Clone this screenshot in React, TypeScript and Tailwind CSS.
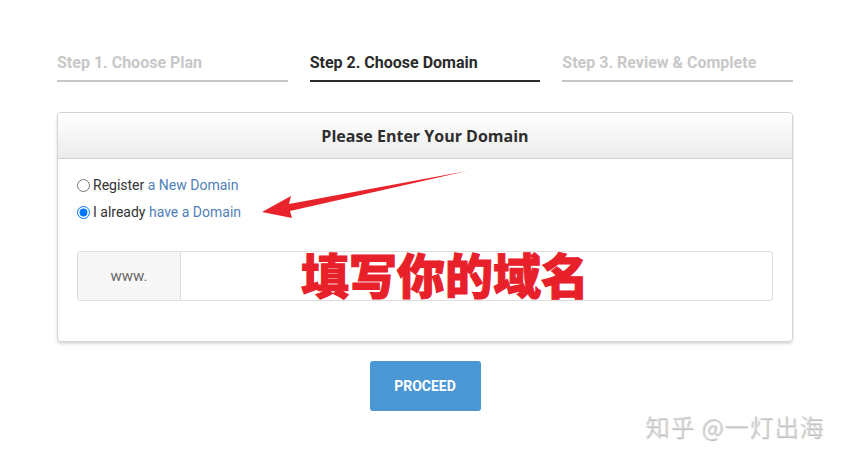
export default function App() {
  const steps = [
    { label: "Step 1. Choose Plan", active: false },
    { label: "Step 2. Choose Domain", active: true },
    { label: "Step 3. Review & Complete", active: false },
  ];

  return (
    <div className="relative w-[850px] h-[460px] bg-white overflow-hidden font-['Roboto',sans-serif]">
      <div className="w-[736px] ml-[57px] pt-[50px]">
        {/* step tabs */}
        <div className="grid grid-cols-3 gap-[22px]">
          {steps.map((s) => (
            <div
              key={s.label}
              className={`h-[32px] text-[16px] leading-[25px] font-bold border-b-2 ${
                s.active ? "text-[#2b2b2b] border-[#2b2b2b]" : "text-[#c8c8c8] border-[#c8c8c8]"
              }`}
            >
              {s.label}
            </div>
          ))}
        </div>

        {/* domain card */}
        <div className="mt-[30px] border border-[#d4d4d4] rounded-[4px] shadow-[0_2px_3px_rgba(0,0,0,0.15)]">
          <div className="h-[46px] flex items-center justify-center bg-gradient-to-b from-white to-[#ececec] border-b border-[#d0d0d0] rounded-t-[4px]">
            <span className="text-[16px] font-bold text-[#2e2e2e] font-['Open_Sans',sans-serif]">
              Please Enter Your Domain
            </span>
          </div>
          <div className="px-[19px] pt-[19px] pb-[40px]">
            <label className="flex items-center gap-[3px] h-[14px] text-[14px] text-[#333]">
              <input type="radio" name="domain" className="w-[13px] h-[13px] m-0" />
              <span>
                Register <span className="text-[#4f7fb8]">a New Domain</span>
              </span>
            </label>
            <label className="flex items-center gap-[3px] h-[14px] mt-[13px] text-[14px] text-[#333]">
              <input type="radio" name="domain" defaultChecked className="w-[13px] h-[13px] m-0" />
              <span>
                I already <span className="text-[#4f7fb8]">have a Domain</span>
              </span>
            </label>

            <div className="mt-[32px] flex h-[50px] border border-[#dedede] rounded-[3px]">
              <div className="w-[103px] flex items-center justify-center bg-[#f7f7f7] border-r border-[#dedede] text-[15px] text-[#666]">
                www.
              </div>
              <div className="flex-1" />
            </div>
          </div>
        </div>

        <div className="flex justify-center mt-[19px]">
          <button className="w-[111px] h-[50px] rounded-[3px] bg-[#4b97d3] text-white text-[14px] font-bold">
            PROCEED
          </button>
        </div>
      </div>

      {/* annotation overlay */}
      <svg className="absolute left-0 top-0" width="850" height="460">
        <path d="M467 171 L289 204 L291 196 L262 212 L292 218 L290 211 Z" fill="#e8232b" />
      </svg>
      <div className="absolute left-[301px] top-[247px] text-[48px] leading-[52px] font-black text-[#e8202a] font-['Noto_Sans_CJK_SC',sans-serif] [-webkit-text-stroke:1px_#e8202a]">
        填写你的域名
      </div>
      <div className="absolute left-[645px] top-[408px] text-[24px] font-light tracking-[1px] text-[#d6d6d6] font-['Noto_Sans_CJK_SC',sans-serif] [text-shadow:1px_1px_1px_rgba(0,0,0,0.3)]">
        知乎 @一灯出海
      </div>
    </div>
  );
}
